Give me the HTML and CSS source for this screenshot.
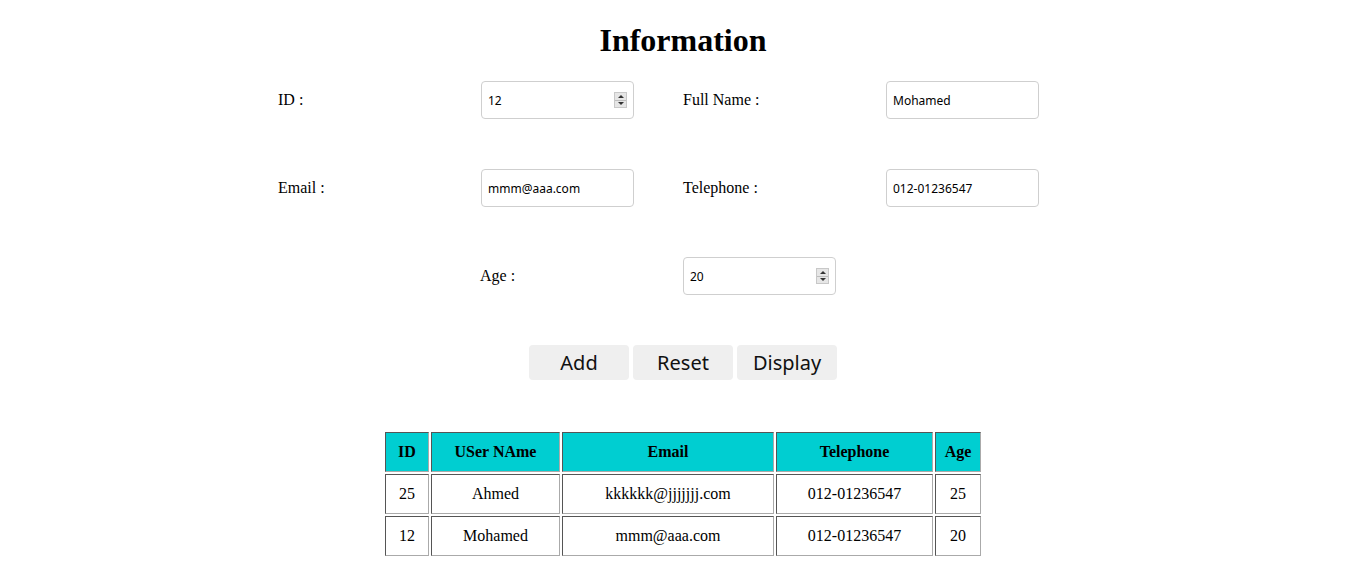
FILE: index.html
```html
<!DOCTYPE html>
<html>
<head>
<meta charset="utf-8">
<title>Information</title>
<link rel="stylesheet" href="styles.css">
</head>
<body>
<h1 class="title">Information</h1>
<div class="form">
  <div class="label first">ID :</div>
  <div class="field"><input class="inp" type="text" value="12"><span class="spin"><span class="up"></span><span class="down"></span></span></div>
  <div class="label">Full Name :</div>
  <div class="field"><input class="inp" type="text" value="Mohamed"></div>

  <div class="label first">Email :</div>
  <div class="field"><input class="inp" type="text" value="mmm@aaa.com"></div>
  <div class="label">Telephone :</div>
  <div class="field"><input class="inp" type="text" value="012-01236547"></div>

  <div class="label skip">Age :</div>
  <div class="field"><input class="inp" type="text" value="20"><span class="spin"><span class="up"></span><span class="down"></span></span></div>
</div>
<div class="buttons">
  <button class="btn">Add</button>
  <button class="btn">Reset</button>
  <button class="btn">Display</button>
</div>
<table class="grid">
  <thead>
    <tr><th class="c-id">ID</th><th class="c-name">USer NAme</th><th class="c-email">Email</th><th class="c-tel">Telephone</th><th class="c-age">Age</th></tr>
  </thead>
  <tbody>
    <tr><td>25</td><td>Ahmed</td><td>kkkkkk@jjjjjjj.com</td><td>012-01236547</td><td>25</td></tr>
    <tr><td>12</td><td>Mohamed</td><td>mmm@aaa.com</td><td>012-01236547</td><td>20</td></tr>
  </tbody>
</table>
</body>
</html>
```

FILE: styles.css
```css
html, body {
  margin: 0;
  padding: 0;
  background: #fff;
}
body {
  font-family: "Liberation Serif", "Times New Roman", serif;
  font-size: 16px;
  color: #000;
}
.title {
  margin: 24px 0 0;
  font-size: 32px;
  line-height: 32px;
  font-weight: bold;
  text-align: center;
}
.form {
  width: 812px;
  margin: 0 auto;
  display: grid;
  grid-template-columns: 204px 202px 203px 203px;
  grid-auto-rows: 88px;
  align-items: center;
}
.first {
  padding-left: 1px;
}
.skip {
  grid-column-start: 2;
  margin-left: -1px;
}
.field {
  display: flex;
  align-items: center;
  width: 153px;
  height: 38px;
  box-sizing: border-box;
  border: 1px solid #cfcfcf;
  border-radius: 4px;
  background: #fff;
}
.inp {
  flex: 1;
  min-width: 0;
  border: none;
  outline: none;
  padding: 0 0 0 6px;
  margin: 0;
  height: 30px;
  font-family: "Noto Sans", "Open Sans", sans-serif;
  font-size: 12px;
  color: #000;
  background: transparent;
}
.spin {
  display: flex;
  flex-direction: column;
  width: 13px;
  height: 16px;
  margin-right: 6px;
  border: 1px solid #c8c8c8;
  background: #e6e6e6;
  box-sizing: border-box;
}
.up, .down {
  flex: 1;
  display: flex;
  align-items: center;
  justify-content: center;
}
.up {
  border-bottom: 1px solid #bdbdbd;
}
.up::before {
  content: "";
  border-left: 3px solid transparent;
  border-right: 3px solid transparent;
  border-bottom: 3px solid #333;
}
.down::before {
  content: "";
  border-left: 3px solid transparent;
  border-right: 3px solid transparent;
  border-top: 3px solid #333;
}
.buttons {
  display: flex;
  justify-content: center;
  gap: 4px;
  margin-top: 25px;
}
.btn {
  width: 100px;
  height: 35px;
  border: none;
  border-radius: 4px;
  background: #efefef;
  font-family: "Noto Sans", "Open Sans", sans-serif;
  font-size: 20px;
  color: #111;
  padding: 0;
}
.grid {
  margin: 50px auto 0;
  border-collapse: separate;
  border-spacing: 2px;
  table-layout: fixed;
  width: 600px;
}
.grid th, .grid td {
  height: 38px;
  padding: 0;
  text-align: center;
  border-style: solid;
  border-width: 1px;
  border-color: #555 #aaa #aaa #555;
  font-size: 16px;
}
.grid th {
  background: #00ced1;
  font-weight: bold;
}
.c-id { width: 42px; }
.c-name { width: 127px; }
.c-email { width: 210px; }
.c-tel { width: 155px; }
.c-age { width: 44px; }
```
